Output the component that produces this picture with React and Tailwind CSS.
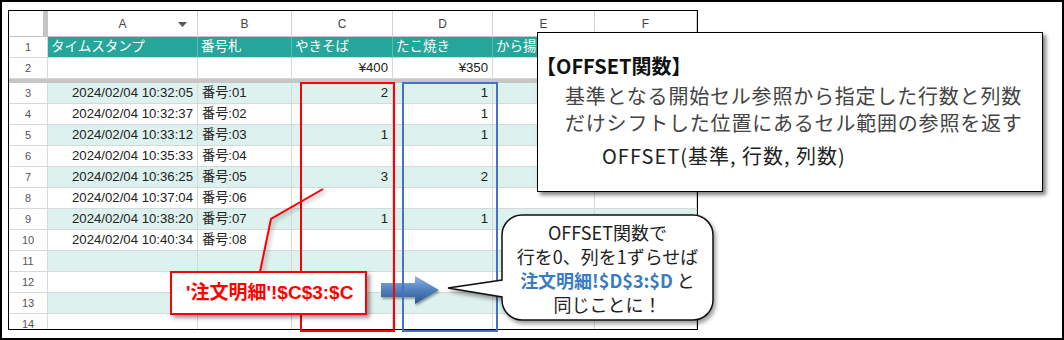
import clsx from "clsx";

const sheetFont = "font-['Liberation_Sans','Noto_Sans_CJK_JP',sans-serif]";
const jpFont = "font-['Noto_Sans_CJK_JP','Liberation_Sans',sans-serif]";

const colW = ["w-[150px]", "w-[94px]", "w-[101px]", "w-[100px]", "w-[102px]", "w-[102px]"];
const align = ["justify-end", "justify-start", "justify-end", "justify-end", "justify-end", "justify-end"];

const data = [
  ["2024/02/04 10:32:05", "番号:01", "2", "1"],
  ["2024/02/04 10:32:37", "番号:02", "", "1"],
  ["2024/02/04 10:33:12", "番号:03", "1", "1"],
  ["2024/02/04 10:35:33", "番号:04", "", ""],
  ["2024/02/04 10:36:25", "番号:05", "3", "2"],
  ["2024/02/04 10:37:04", "番号:06", "", ""],
  ["2024/02/04 10:38:20", "番号:07", "1", "1"],
  ["2024/02/04 10:40:34", "番号:08", "", ""],
  ["", "", "", ""],
  ["", "", "", ""],
  ["", "", "", ""],
  ["", "", "", ""],
];

function RowNum({ n }) {
  return (
    <div className="w-[39px] shrink-0 border-r border-b border-[#d6d9d9] bg-white flex items-center justify-center text-[11px] text-[#555]">
      {n}
    </div>
  );
}

function Row({ n, cells, tinted }) {
  return (
    <div className="flex h-[21px]">
      <RowNum n={n} />
      {colW.map((w, i) => (
        <div
          key={i}
          className={clsx(
            w,
            align[i],
            "shrink-0 border-r border-b border-[#d6d9d9] flex items-center px-[4px] text-[13.2px] text-[#222] whitespace-nowrap",
            tinted ? "bg-[#ddf1ee]" : "bg-white"
          )}
        >
          {cells[i] || ""}
        </div>
      ))}
    </div>
  );
}

function Sheet() {
  const letters = ["A", "B", "C", "D", "E", "F"];
  const heads = ["タイムスタンプ", "番号札", "やきそば", "たこ焼き", "から揚げ", ""];
  return (
    <div className={clsx("w-[690px] h-[320px] border border-black overflow-hidden bg-white", sheetFont)}>
      {/* column letters */}
      <div className="flex h-[26px]">
        <div className="w-[39px] shrink-0 border-r-[5px] border-b border-r-[#c4c4c4] border-b-[#c4c4c4] bg-white" />
        {letters.map((l, i) => (
          <div
            key={l}
            className={clsx(
              colW[i],
              "shrink-0 relative border-r border-b border-[#d0d3d3] border-b-[#c4c4c4] flex items-center justify-center text-[12px] text-[#444]"
            )}
          >
            {l}
            {i === 0 && (
              <svg className="absolute right-[10px] top-[11px] w-[9px] h-[5px]" viewBox="0 0 9 5">
                <path d="M0 0 H9 L4.5 5 Z" fill="#555" />
              </svg>
            )}
          </div>
        ))}
      </div>

      {/* row 1 header */}
      <div className="flex h-[21px]">
        <RowNum n="1" />
        {heads.map((h, i) => (
          <div
            key={i}
            className={clsx(
              colW[i],
              "shrink-0 bg-[#26a69a] border-r border-r-[#5dbdb3] border-b border-b-[#d6d9d9] flex items-center px-[3px] text-[13.5px] text-white whitespace-nowrap overflow-hidden"
            )}
          >
            {h}
          </div>
        ))}
      </div>

      {/* row 2 prices */}
      <Row n="2" cells={["", "", "¥400", "¥350"]} />

      <div className="h-[4px] bg-[#c6c6c6]" />

      {data.map((r, i) => (
        <Row key={i} n={String(i + 3)} cells={r} tinted={i % 2 === 0} />
      ))}
    </div>
  );
}

export default function App() {
  return (
    <div className="relative w-[1064px] h-[340px] bg-white shadow-[inset_0_0_0_2px_#000] pl-[8px] pt-[10px] overflow-hidden">
      <Sheet />

      {/* blue arrow */}
      <svg
        className="absolute left-[378px] top-[273px] w-[64px] h-[34px] drop-shadow-[1px_2px_1px_rgba(0,0,0,0.35)]"
        viewBox="0 0 64 34"
      >
        <defs>
          <linearGradient id="arw" x1="0" y1="0" x2="0" y2="1">
            <stop offset="0" stopColor="#8db4e2" />
            <stop offset="0.5" stopColor="#4f81bd" />
            <stop offset="1" stopColor="#2c5590" />
          </linearGradient>
        </defs>
        <path d="M3 10 H37 V3 L61 17 L37 31 V24 H3 Z" fill="url(#arw)" />
      </svg>

      {/* red / blue range frames */}
      <div className="absolute left-[300px] top-[82px] w-[95px] h-[250px] border-2 border-[#ff0000]" />
      <div className="absolute left-[402px] top-[82px] w-[96px] h-[250px] border-2 border-[#4472c4]" />

      {/* red connector */}
      <svg className="absolute left-0 top-0 w-[1064px] h-[340px] pointer-events-none drop-shadow-[2px_2px_2px_rgba(0,0,0,0.35)]" viewBox="0 0 1064 340">
        <polyline points="260,272 271,219 323,189" fill="none" stroke="#ff0000" strokeWidth="2" />
      </svg>

      {/* red label */}
      <div className="absolute left-[170px] top-[271px] w-[197px] h-[44px] bg-white border-2 border-[#ff0000] shadow-[3px_3px_4px_rgba(0,0,0,0.4)] flex items-center pl-[14px]">
        <span className={clsx("text-[19px] font-bold text-[#ff0000] whitespace-nowrap", sheetFont)}>
          '注文明細'!$C$3:$C
        </span>
      </div>

      {/* speech bubble */}
      <svg
        className="absolute left-[440px] top-[210px] w-[280px] h-[116px] drop-shadow-[2px_3px_2px_rgba(0,0,0,0.4)]"
        viewBox="0 0 280 116"
      >
        <path
          d="M82 5 H253 A20 20 0 0 1 273 25 V90 A20 20 0 0 1 253 110 H82 A20 20 0 0 1 62 90 V87 L8 78 L62 70 V25 A20 20 0 0 1 82 5 Z"
          fill="#fff"
          stroke="#111"
          strokeWidth="1.5"
        />
      </svg>
      <div
        className={clsx(
          "absolute left-[502px] top-[215px] w-[211px] h-[105px] flex flex-col items-center justify-center text-[18px] leading-[24px] text-[#222] whitespace-nowrap",
          jpFont
        )}
      >
        <div>OFFSET関数で</div>
        <div>行を0、列を1ずらせば</div>
        <div>
          <span className="font-bold text-[#3a7cc4]">注文明細!$D$3:$D</span> と
        </div>
        <div>同じことに！</div>
      </div>

      {/* OFFSET explanation */}
      <div
        className={clsx(
          "absolute left-[537px] top-[32px] w-[506px] h-[160px] bg-white border-[1.5px] border-black shadow-[3px_3px_4px_rgba(0,0,0,0.5)] flex flex-col",
          jpFont
        )}
      >
        <div className="mt-[19px] ml-[-2px] text-[20px] leading-[28px] font-bold text-[#111] whitespace-nowrap">
          【OFFSET関数】
        </div>
        <div className="mt-[2px] ml-[27px] text-[20px] leading-[27px] tracking-[0.8px] text-[#444] whitespace-nowrap">
          <div>基準となる開始セル参照から指定した行数と列数</div>
          <div>だけシフトした位置にあるセル範囲の参照を返す</div>
        </div>
        <div className="mt-[6px] ml-[64px] text-[20px] leading-[27px] tracking-[1px] text-[#222] whitespace-nowrap">
          OFFSET(基準, 行数, 列数)
        </div>
      </div>
    </div>
  );
}
